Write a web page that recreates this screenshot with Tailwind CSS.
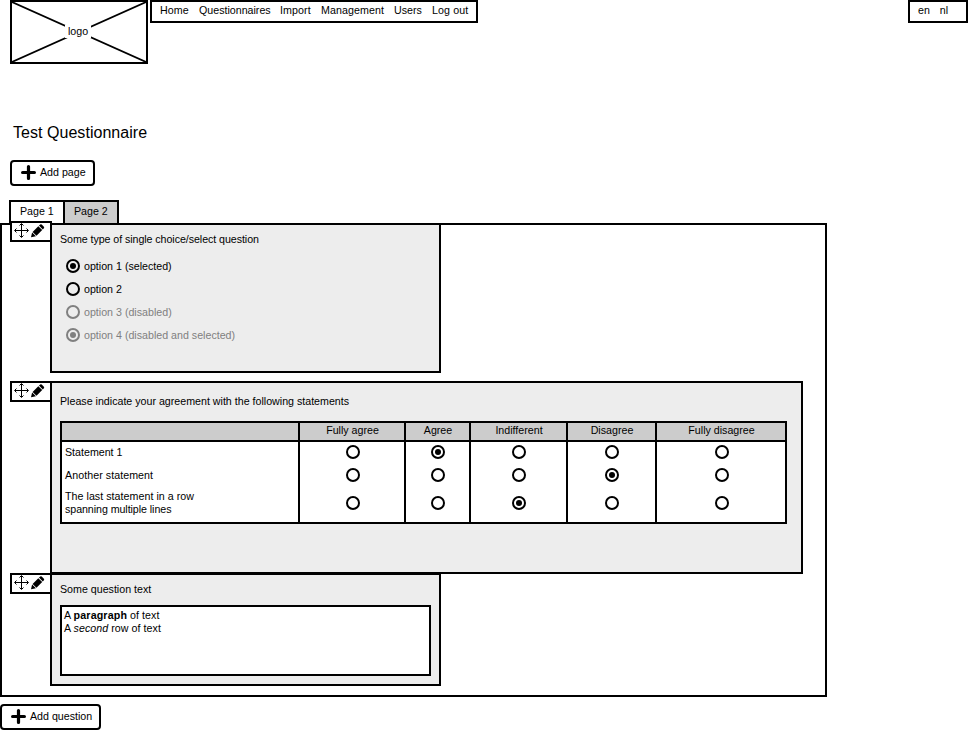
<!DOCTYPE html>
<html lang="en">
<head>
<meta charset="utf-8">
<title>Test Questionnaire</title>
<script src="https://cdn.jsdelivr.net/npm/@tailwindcss/browser@4"></script>
</head>
<body class="h-[730px] w-[968px] overflow-hidden bg-white font-['Liberation_Sans',Arial,sans-serif] text-[10.667px] leading-[13px] text-black">
<svg class="hidden">
  <symbol id="off" viewBox="0 0 14 14"><circle cx="7" cy="7" r="6" fill="none" stroke="currentColor" stroke-width="2"/></symbol>
  <symbol id="on" viewBox="0 0 14 14"><circle cx="7" cy="7" r="6" fill="none" stroke="currentColor" stroke-width="2"/><circle cx="7" cy="7" r="3" fill="currentColor"/></symbol>
  <symbol id="plus" viewBox="0 0 14 14"><path d="M7 1.5v11M1.5 7h11" stroke="currentColor" stroke-width="3" stroke-linecap="round"/></symbol>
  <symbol id="move" viewBox="0 0 15 15"><path d="M7.5 1v13M1 7.5h13M5.5 2.5l2-2 2 2M5.5 12.500l2 2 2-2M2.500 5.500l-2 2 2 2M12.500 5.500l2 2-2 2" fill="none" stroke="currentColor" stroke-width="1"/></symbol>
  <symbol id="pencil" viewBox="0 0 14 14"><path d="M0 13.300L1.100 8.500L4.900 12.300zM1.600 7.900L7.300 2.200L11.200 6.100L5.500 11.800zM8 1.600L9.200.5q.8-.6 1.500 0l2.200 2.200q.6.800 0 1.500L11.800 5.400z" fill="currentColor"/></symbol>
</svg>

<header class="flex h-16 items-start pl-[10px]">
  <div class="relative flex h-16 w-[138px] items-center justify-center border-2 border-black">
    <svg class="absolute inset-0 h-full w-full" viewBox="0 0 134 60"><path d="M0 0L134 60M134 0L0 60" stroke="black" stroke-width="1.700"/></svg>
    <span class="relative mr-0.5 mb-0.5 bg-white px-[3px]">logo</span>
  </div>
  <nav class="ml-0.5 flex h-[23px] w-[328px] gap-[10px] border-2 border-black pt-0.5 pl-2 whitespace-nowrap">
    <a class="w-[29px] tracking-[0.1px]">Home</a><a class="w-[71px]">Questionnaires</a><a class="w-[31px] tracking-[0.1px]">Import</a><a class="w-[63px] tracking-[0.08px]">Management</a><a class="w-7">Users</a><a class="tracking-[0.1px]">Log out</a>
  </nav>
  <div class="ml-auto flex h-[23px] w-[60px] gap-[10px] border-2 border-black pt-0.5 pl-2"><a>en</a><a>nl</a></div>
</header>

<h1 class="mt-[60px] ml-[13px] text-[16px] leading-[18px] tracking-[0.04px]">Test Questionnaire</h1>

<button class="mt-[18px] ml-[10px] flex h-[26px] w-[85px] items-center gap-1 rounded-[4px] border-2 border-black pb-px pl-[9px]">
  <svg class="size-[15px]"><use href="#plus"/></svg><span>Add page</span>
</button>

<div class="mt-[14px] ml-[9px] flex h-[23px]">
  <div class="w-[54px] border-2 border-r-0 border-b-0 border-black pt-[3px] pl-[9px]">Page 1</div>
  <div class="w-14 border-2 border-b-0 border-black bg-[#ccc] pt-[3px] pl-[9px]">Page 2</div>
</div>

<main class="h-[474px] w-[827px] border-2 border-black pl-2">
  <section class="-mt-0.5 flex h-[150px] items-start">
    <div class="-mt-0.5 -mr-0.5 flex h-[21px] w-[42px] gap-[2px] border-2 border-black bg-white pl-0.5">
      <svg class="size-[15px]"><use href="#move"/></svg><svg class="mt-px size-[14px]"><use href="#pencil"/></svg>
    </div>
    <div class="h-[150px] w-[391px] border-2 border-black bg-[#ededed] pt-2 pl-2">
      <p class="tracking-[-0.06px]">Some type of single choice/select question</p>
      <ul class="mt-[9px] ml-1.5">
        <li class="flex h-[23px] items-center gap-1"><svg class="mb-px size-[14px]"><use href="#on"/></svg><span>option 1 (selected)</span></li>
        <li class="flex h-[23px] items-center gap-1"><svg class="mb-px size-[14px]"><use href="#off"/></svg><span>option 2</span></li>
        <li class="flex h-[23px] items-center gap-1 text-[#808080]"><svg class="mb-px size-[14px]"><use href="#off"/></svg><span>option 3 (disabled)</span></li>
        <li class="flex h-[23px] items-center gap-1 text-[#808080]"><svg class="mb-px size-[14px]"><use href="#on"/></svg><span>option 4 (disabled and selected)</span></li>
      </ul>
    </div>
  </section>

  <section class="mt-2 flex h-[193px] items-start">
    <div class="flex h-[21px] w-10 gap-[2px] border-2 border-r-0 border-black bg-white pl-0.5">
      <svg class="size-[15px]"><use href="#move"/></svg><svg class="mt-px size-[14px]"><use href="#pencil"/></svg>
    </div>
    <div class="h-[193px] w-[753px] border-2 border-black bg-[#ededed] pt-3 pl-2">
      <p>Please indicate your agreement with the following statements</p>
      <div class="mt-[13px] h-[103px] w-[727px] border-2 border-black bg-white">
        <div class="grid h-[19px] grid-cols-[236px_106px_65px_97px_89px_130px] border-b-2 border-black bg-[#ccc] text-center *:border-black *:pt-px *:pl-px [&>*+*]:border-l-2">
          <div></div><div>Fully agree</div><div>Agree</div><div>Indifferent</div><div>Disagree</div><div>Fully disagree</div>
        </div>
        <div class="grid h-5 grid-cols-[236px_106px_65px_97px_89px_130px] *:flex *:items-center *:border-black [&>*+*]:justify-center [&>*+*]:border-l-2">
          <div class="pl-[3px]">Statement 1</div>
          <div class="pl-0.5"><svg class="size-[14px]"><use href="#off"/></svg></div>
          <div class="pl-px"><svg class="size-[14px]"><use href="#on"/></svg></div>
          <div class="pl-px"><svg class="size-[14px]"><use href="#off"/></svg></div>
          <div class="pl-px"><svg class="size-[14px]"><use href="#off"/></svg></div>
          <div class="pl-0.5"><svg class="size-[14px]"><use href="#off"/></svg></div>
        </div>
        <div class="grid h-[26px] grid-cols-[236px_106px_65px_97px_89px_130px] *:flex *:items-center *:border-black [&>*+*]:justify-center [&>*+*]:border-l-2">
          <div class="pl-[3px] tracking-[0.06px]">Another statement</div>
          <div class="pl-0.5"><svg class="size-[14px]"><use href="#off"/></svg></div>
          <div class="pl-px"><svg class="size-[14px]"><use href="#off"/></svg></div>
          <div class="pl-px"><svg class="size-[14px]"><use href="#off"/></svg></div>
          <div class="pl-px"><svg class="size-[14px]"><use href="#on"/></svg></div>
          <div class="pl-0.5"><svg class="size-[14px]"><use href="#off"/></svg></div>
        </div>
        <div class="grid h-[34px] grid-cols-[236px_106px_65px_97px_89px_130px] *:flex *:items-center *:border-black *:pb-1 [&>*+*]:justify-center [&>*+*]:border-l-2">
          <div class="pl-[3px]"><p><span class="tracking-[0.04px]">The last statement in a row</span><br><span class="tracking-[-0.06px]">spanning multiple lines</span></p></div>
          <div class="pl-0.5"><svg class="size-[14px]"><use href="#off"/></svg></div>
          <div class="pl-px"><svg class="size-[14px]"><use href="#off"/></svg></div>
          <div class="pl-px"><svg class="size-[14px]"><use href="#on"/></svg></div>
          <div class="pl-px"><svg class="size-[14px]"><use href="#off"/></svg></div>
          <div class="pl-0.5"><svg class="size-[14px]"><use href="#off"/></svg></div>
        </div>
      </div>
    </div>
  </section>

  <section class="-mt-px flex h-[113px] items-start">
    <div class="flex h-[21px] w-10 gap-[2px] border-2 border-r-0 border-black bg-white pl-0.5">
      <svg class="size-[15px]"><use href="#move"/></svg><svg class="mt-px size-[14px]"><use href="#pencil"/></svg>
    </div>
    <div class="h-[113px] w-[391px] border-2 border-black bg-[#ededed] pt-2 pl-2">
      <p>Some question text</p>
      <div class="mt-[9px] h-[71px] w-[371px] border-2 border-black bg-white pt-0.5 pl-0.5">
        <p class="tracking-[0.05px]">A <b class="tracking-[0.15px]">paragraph</b> of text</p>
        <p class="tracking-[0.05px]">A <i>second</i> row of text</p>
      </div>
    </div>
  </section>
</main>

<button class="mt-[7px] flex h-[26px] w-[101px] items-center gap-1 rounded-[4px] border-2 border-black pb-px pl-[9px]">
  <svg class="size-[15px]"><use href="#plus"/></svg><span>Add question</span>
</button>
</body>
</html>
